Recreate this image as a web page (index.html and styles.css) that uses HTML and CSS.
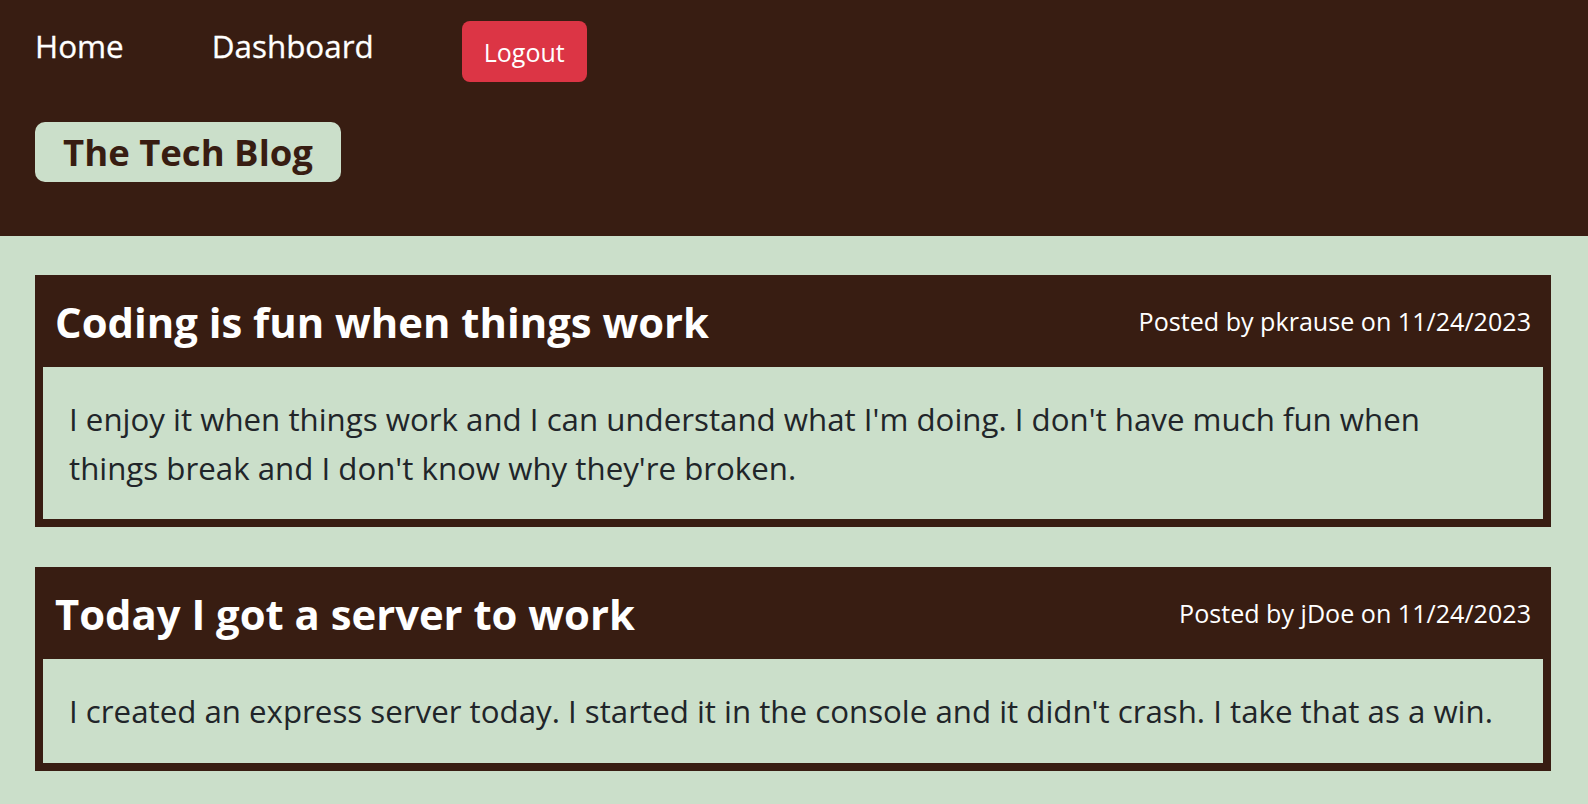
FILE: index.html
```html
<!DOCTYPE html>
<html lang="en">
<head>
<meta charset="utf-8">
<title>The Tech Blog</title>
<link rel="stylesheet" href="styles.css">
</head>
<body>
<header class="site-header">
  <nav class="nav">
    <a class="nav-link" href="#">Home</a>
    <a class="nav-link" href="#">Dashboard</a>
    <button class="btn-logout" type="button">Logout</button>
  </nav>
  <h1 class="brand">The Tech Blog</h1>
</header>
<main class="posts">
  <article class="post">
    <div class="post-head">
      <h2 class="post-title">Coding is fun when things work</h2>
      <span class="post-meta">Posted by pkrause on 11/24/2023</span>
    </div>
    <div class="post-body">
      <p>I enjoy it when things work and I can understand what I'm doing. I don't have much fun when things break and I don't know why they're broken.</p>
    </div>
  </article>
  <article class="post">
    <div class="post-head">
      <h2 class="post-title">Today I got a server to work</h2>
      <span class="post-meta">Posted by jDoe on 11/24/2023</span>
    </div>
    <div class="post-body">
      <p>I created an express server today. I started it in the console and it didn't crash. I take that as a win.</p>
    </div>
  </article>
</main>
</body>
</html>
```
FILE: styles.css
```css
* { box-sizing: border-box; }

html, body {
  margin: 0;
  padding: 0;
}

body {
  background: #cbdfca;
  color: #212529;
  font-family: "Open Sans", "Noto Sans", sans-serif;
}

.site-header {
  background: #381d12;
  height: 236px;
  padding: 21px 35px 0 35px;
}

.nav {
  display: flex;
  align-items: flex-start;
  gap: 88px;
}

.nav-link {
  color: #ffffff;
  text-decoration: none;
  font-size: 31.4px;
  line-height: 1.362;
  margin-top: 4px;
  -webkit-text-stroke: 0.3px #ffffff;
}

.btn-logout {
  font-family: inherit;
  font-size: 25px;
  line-height: 34px;
  color: #ffffff;
  background: #dc3545;
  border: 0;
  border-radius: 8px;
  padding: 13.5px 22px;
  height: 61px;
  margin: 0;
}

.brand {
  display: inline-block;
  margin: 40px 0 0 0;
  padding: 5px 28px;
  background: #cbdfca;
  color: #381d12;
  font-size: 36.5px;
  font-weight: 700;
  line-height: 50px;
  border-radius: 10px;
}

.posts {
  padding: 39px 37px 20px 35px;
  display: flex;
  flex-direction: column;
  gap: 40px;
}

.post {
  background: #381d12;
  padding: 0 8px 8px 8px;
}

.post-head {
  display: flex;
  align-items: center;
  justify-content: space-between;
  min-height: 92px;
  padding: 0 12px 0 12px;
}

.post-title {
  margin: 0;
  color: #ffffff;
  font-size: 41.8px;
  font-weight: 700;
  line-height: 57px;
}

.post-meta {
  color: #ffffff;
  font-size: 25.1px;
  line-height: 34px;
}

.post-body {
  background: #cbdfca;
  padding: 28px 34px 27px 26px;
}

.post-body p {
  margin: 0;
  font-size: 31.25px;
  line-height: 48.5px;
}
```
